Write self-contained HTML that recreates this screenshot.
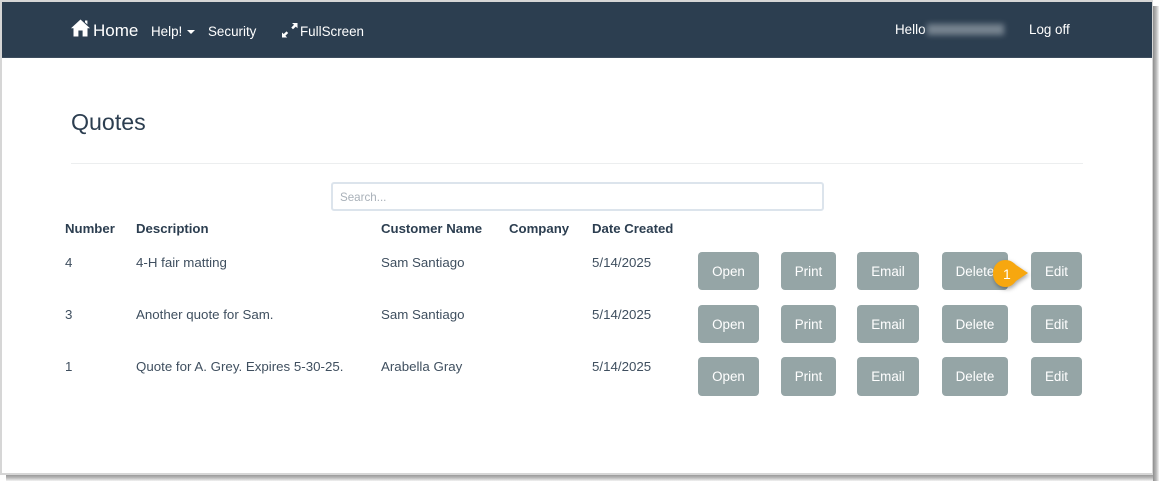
<!DOCTYPE html>
<html><head><meta charset="utf-8">
<style>
html,body{margin:0;padding:0;background:#fff;}
body{width:1164px;height:485px;position:relative;overflow:hidden;font-family:"Liberation Sans",sans-serif;color:#2c3e50;font-size:13.3px;}
.a{position:absolute;white-space:nowrap;line-height:20px;}
.b{position:absolute;background:#95a5a6;border-radius:4px;color:#fff;font-size:13.4px;line-height:40px;height:38px;text-align:center;}
.h{font-weight:bold;font-size:13.2px;}
.n{color:#fff;font-size:13.4px;}
.t{color:#3f4f5f;}
</style></head><body>
<!-- frame shadow -->
<div style="position:absolute;left:6px;top:474px;width:1153px;height:7px;background:linear-gradient(#8f8f8f,#b5b5b5 50%,#f2f2f2);"></div>
<div style="position:absolute;left:1153px;top:6px;width:6px;height:475px;background:linear-gradient(90deg,#8f8f8f,#b5b5b5 50%,#f2f2f2);"></div>
<!-- frame -->
<div style="position:absolute;left:0;top:0;width:1153px;height:475px;background:#d6d6d6;"></div>
<div style="position:absolute;left:2px;top:2px;width:1150px;height:471px;background:#fff;"></div>
<!-- nav -->
<div style="position:absolute;left:2px;top:2px;width:1150px;height:55px;background:#2c3e50;border-bottom:1px solid #3d4d5e;"></div>
<svg style="position:absolute;left:71px;top:19px" width="19" height="18" viewBox="0 0 19 18"><path d="M9.5 .5 L19 9.2 L16.5 9.2 L16.5 17.5 L11.6 17.5 L11.6 11.5 L7.4 11.5 L7.4 17.5 L2.5 17.5 L2.5 9.2 L0 9.2 Z M14 1.5 h2.4 v4 L14 3.4 Z" fill="#fff"/></svg>
<div class="a n" style="left:93px;top:21px;font-size:17px;">Home</div>
<div class="a n" style="left:151px;top:22px;">Help!</div>
<div style="position:absolute;left:187px;top:30px;width:0;height:0;border-left:4px solid transparent;border-right:4px solid transparent;border-top:4px solid #fff;"></div>
<div class="a n" style="left:208px;top:22px;">Security</div>
<svg style="position:absolute;left:282px;top:23px" width="16" height="15" viewBox="0 0 16 15"><path d="M10 0 H15.5 V5.2 L13.8 3.6 L11 6.3 L9.3 4.6 L12 1.8 Z M0 9.5 L1.7 11 L4.5 8.4 L6.2 10 L3.4 12.8 L5.2 14.5 H0 Z" fill="#fff"/></svg>
<div class="a n" style="left:300px;top:22px;">FullScreen</div>
<div class="a n" style="left:895px;top:20px;">Hello</div>
<div style="position:absolute;left:927px;top:24px;width:77px;height:11px;background:#76838f;filter:blur(3px);"></div>
<div class="a n" style="left:1029px;top:20px;">Log off</div>
<!-- heading -->
<div class="a" style="left:71px;top:109px;font-size:23.2px;line-height:26px;">Quotes</div>
<div style="position:absolute;left:71px;top:163px;width:1012px;height:1px;background:#eceeef;"></div>
<!-- search -->
<div style="position:absolute;left:331px;top:182px;width:489px;height:25px;border:2px solid #dce4ec;border-radius:3px;background:#fff;"></div>
<div class="a" style="left:340px;top:188px;font-size:11.6px;color:#a9b1b9;">Search...</div>
<!-- table head -->
<div class="a h" style="left:65px;top:219px;">Number</div>
<div class="a h" style="left:136px;top:219px;">Description</div>
<div class="a h" style="left:381px;top:219px;">Customer Name</div>
<div class="a h" style="left:509px;top:219px;">Company</div>
<div class="a h" style="left:592px;top:219px;">Date Created</div>
<!-- row 1 -->
<div class="a t" style="left:65px;top:253px;">4</div>
<div class="a t" style="left:136px;top:253px;">4-H fair matting</div>
<div class="a t" style="left:381px;top:253px;">Sam Santiago</div>
<div class="a t" style="left:592px;top:253px;">5/14/2025</div>
<div class="b" style="left:698px;top:252px;width:61px;">Open</div>
<div class="b" style="left:781px;top:252px;width:55px;">Print</div>
<div class="b" style="left:857px;top:252px;width:62px;">Email</div>
<div class="b" style="left:942px;top:252px;width:66px;">Delete</div>
<div class="b" style="left:1031px;top:252px;width:51px;">Edit</div>
<!-- row 2 -->
<div class="a t" style="left:65px;top:305px;">3</div>
<div class="a t" style="left:136px;top:305px;">Another quote for Sam.</div>
<div class="a t" style="left:381px;top:305px;">Sam Santiago</div>
<div class="a t" style="left:592px;top:305px;">5/14/2025</div>
<div class="b" style="left:698px;top:305px;width:61px;">Open</div>
<div class="b" style="left:781px;top:305px;width:55px;">Print</div>
<div class="b" style="left:857px;top:305px;width:62px;">Email</div>
<div class="b" style="left:942px;top:305px;width:66px;">Delete</div>
<div class="b" style="left:1031px;top:305px;width:51px;">Edit</div>
<!-- row 3 -->
<div class="a t" style="left:65px;top:357px;">1</div>
<div class="a t" style="left:136px;top:357px;">Quote for A. Grey. Expires 5-30-25.</div>
<div class="a t" style="left:381px;top:357px;">Arabella Gray</div>
<div class="a t" style="left:592px;top:357px;">5/14/2025</div>
<div class="b" style="left:698px;top:357px;width:61px;height:39px;">Open</div>
<div class="b" style="left:781px;top:357px;width:55px;height:39px;">Print</div>
<div class="b" style="left:857px;top:357px;width:62px;height:39px;">Email</div>
<div class="b" style="left:942px;top:357px;width:66px;height:39px;">Delete</div>
<div class="b" style="left:1031px;top:357px;width:51px;height:39px;">Edit</div>
<!-- callout -->
<svg style="position:absolute;left:990px;top:258px;filter:drop-shadow(1px 2px 2px rgba(0,0,0,.35));" width="42" height="32" viewBox="0 0 42 32"><path d="M15.5 2 C20 2 23 4 26 7 L38 15 L26 23 C23 27 20 29 15.5 29 C8 29 3 23 3 15.5 C3 8 8 2 15.5 2 Z" fill="#f7a70f"/></svg>
<div class="a" style="left:1003px;top:264px;color:#fff;font-size:14px;">1</div>
</body></html>
